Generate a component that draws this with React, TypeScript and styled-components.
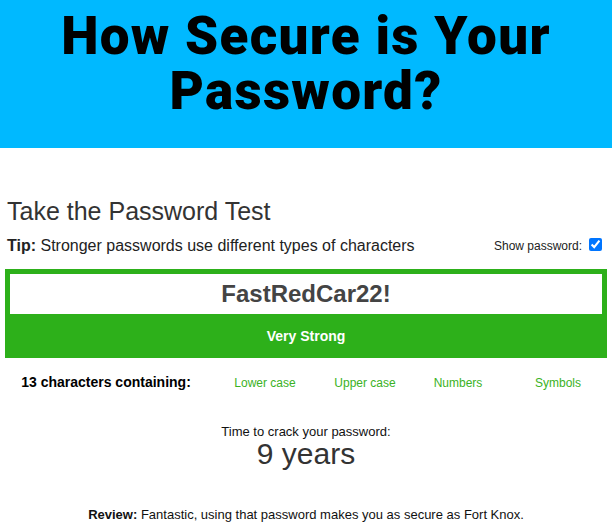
import React from 'react';
import styled, {createGlobalStyle} from 'styled-components';

const GlobalStyle = createGlobalStyle`
    html, body {
        margin: 0;
        padding: 0;
        background: #fff;
    }
    body {
        font-family: 'Liberation Sans', Arial, sans-serif;
        color: #222;
    }
`;

interface CheckProps {
    passed: boolean
}

const checks = [
    {label: 'Lower case', passed: true},
    {label: 'Upper case', passed: true},
    {label: 'Numbers', passed: true},
    {label: 'Symbols', passed: true},
];

const App = () => {
    const password = 'FastRedCar22!';

    return(
        <>
            <GlobalStyle/>
            <Header>
                <Title>How Secure is Your<br/>Password?</Title>
            </Header>
            <Main>
                <Heading>Take the Password Test</Heading>
                <TipRow>
                    <Tip><b>Tip:</b> Stronger passwords use different types of characters</Tip>
                    <ShowLabel>
                        Show password:
                        <Checkbox type="checkbox" checked readOnly/>
                    </ShowLabel>
                </TipRow>
                <Meter>
                    <PasswordInput type="text" value={password} readOnly/>
                    <Strength>Very Strong</Strength>
                </Meter>
                <Checks>
                    <Count>{password.length} characters containing:</Count>
                    {checks.map(c => (
                        <Check key={c.label} passed={c.passed}>{c.label}</Check>
                    ))}
                </Checks>
                <Crack>
                    <CrackLabel>Time to crack your password:</CrackLabel>
                    <CrackTime>9 years</CrackTime>
                </Crack>
                <Review><b>Review:</b> Fantastic, using that password makes you as secure as Fort Knox.</Review>
            </Main>
        </>
    )
}

export default App;

const Header = styled.header`
    background-color: #00b9ff;
    height: 148px;
    display: flex;
    justify-content: center;
    padding-top: 9px;
    box-sizing: border-box;
`;

const Title = styled.h1`
    margin: 0;
    font-family: Roboto, sans-serif;
    font-weight: 900;
    font-size: 53px;
    line-height: 55px;
    letter-spacing: 1.3px;
    color: #000;
    text-align: center;
`;

const Main = styled.main`
    padding: 0 5px;
`;

const Heading = styled.h2`
    margin: 49px 0 0 2px;
    font-size: 25px;
    font-weight: normal;
    color: #333;
    line-height: 29px;
`;

const TipRow = styled.div`
    display: flex;
    align-items: center;
    justify-content: space-between;
    margin-top: 11px;
    padding-left: 2px;
`;

const Tip = styled.p`
    margin: 0;
    font-size: 16px;
    color: #222;
`;

const ShowLabel = styled.label`
    display: flex;
    align-items: center;
    font-size: 12px;
    color: #222;
    margin-right: 2px;
`;

const Checkbox = styled.input`
    width: 13px;
    height: 13px;
    margin: 0 3px 3px 7px;
    accent-color: #0075ff;
`;

const Meter = styled.div`
    margin-top: 14px;
    background-color: #2db01a;
    padding: 5px 5px 0;
`;

const PasswordInput = styled.input`
    display: block;
    width: 100%;
    box-sizing: border-box;
    height: 40px;
    border: none;
    outline: none;
    background: #fff;
    text-align: center;
    font-family: 'Liberation Sans', Arial, sans-serif;
    font-weight: bold;
    font-size: 24px;
    color: #444;
    padding: 0;
`;

const Strength = styled.div`
    height: 44px;
    display: flex;
    align-items: center;
    justify-content: center;
    color: #fff;
    font-weight: bold;
    font-size: 14px;
`;

const Checks = styled.div`
    display: grid;
    grid-template-columns: 202px 116px 84px 102px 1fr;
    align-items: center;
    margin-top: 16px;
    text-align: center;
`;

const Count = styled.div`
    font-weight: bold;
    font-size: 14px;
    color: #000;
`;

const Check = styled.div<CheckProps>`
    font-size: 12px;
    padding-top: 2px;
    color: ${props => props.passed ? '#3ab224' : '#999'};
`;

const Crack = styled.div`
    margin-top: 34px;
    text-align: center;
`;

const CrackLabel = styled.div`
    font-size: 13px;
    color: #111;
`;

const CrackTime = styled.div`
    font-size: 30px;
    line-height: 30px;
    color: #333;
`;

const Review = styled.p`
    margin: 38px 0 0;
    text-align: center;
    font-size: 13px;
    color: #111;
`;
